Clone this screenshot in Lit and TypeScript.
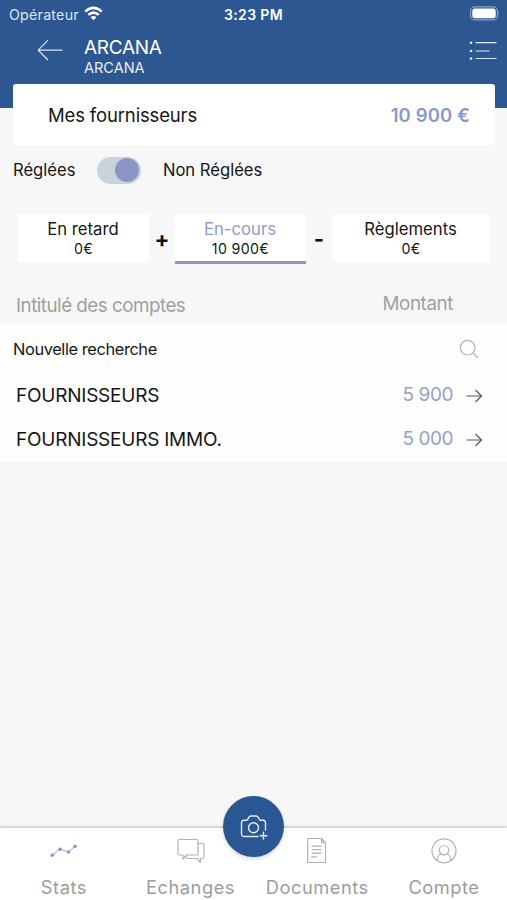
import { LitElement, html, css, svg } from "lit";
import { customElement } from "lit/decorators.js";

const accounts = [
  { label: "FOURNISSEURS", amount: "5 900", cls: "a1" },
  { label: "FOURNISSEURS IMMO.", amount: "5 000", cls: "a2" },
];

const icons = {
  stats: svg`<g fill="#8c93cb" stroke="#a0a5d6" stroke-width="1"><path fill="none" d="M3.300 18.200L11 12.200L19.500 15L26 9.200"/><g stroke="none"><circle cx="3.300" cy="18.200" r="1.800"/><circle cx="11" cy="12.200" r="1.800"/><circle cx="19.500" cy="15" r="1.800"/><circle cx="26" cy="9.200" r="1.800"/></g></g>`,
  chat: svg`<g fill="none" stroke="#b2b2b2" stroke-width="1.200" stroke-linejoin="round"><path d="M3.500 2.500H20.500Q22 2.500 22 4V16.500Q22 18 20.500 18H10.500L7 22V18H3.500Q2 18 2 16.500V4Q2 2.500 3.500 2.500Z"/><path d="M22 6.500H26.500Q28 6.500 28 8V20Q28 21.500 26.500 21.500H24.500V25.500L21 21.500H11.500Q10 21.500 10 20V18.500"/></g>`,
  doc: svg`<g fill="none" stroke="#b2b2b2" stroke-width="1.200" stroke-linejoin="round"><path d="M5.700 1.500H19.500L23.500 5.700V25.500H5.700ZM19.500 1.500V5.700H23.500M9.500 9.200H19.500M9.500 12.700H19.500M9.500 16.200H19.500M9.500 19.800H15"/></g>`,
  user: svg`<g fill="none" stroke="#b2b2b2" stroke-width="1.200"><circle cx="15" cy="13.800" r="12"/><circle cx="15" cy="13.200" r="4.700"/><path d="M8 23.500C8 19.500 10 17 12.300 16.900M22 23.500C22 19.500 20 17 17.700 16.900"/></g>`,
};

const tabs = [
  { label: "Stats", icon: icons.stats, cls: "t1" },
  { label: "Echanges", icon: icons.chat, cls: "t2" },
  { label: "Documents", icon: icons.doc, cls: "t3" },
  { label: "Compte", icon: icons.user, cls: "t4" },
];

@customElement("app-root")
export class AppRoot extends LitElement {
  static styles = css`
    :host {
      display: flex;
      flex-direction: column;
      height: 900px;
      overflow: hidden;
      background: #f7f7f7;
      color: #161616;
      font-family: Inter, "Liberation Sans", sans-serif;
      white-space: nowrap;
    }
    * { box-sizing: border-box; }
    svg { display: block; flex: none; }
    header { height: 108px; flex: none; background: #2d5790; color: #fff; }
    .status {
      display: grid;
      grid-template-columns: 1fr auto 1fr;
      align-items: center;
      height: 28px;
      padding: 0 7px 0 9px;
    }
    .carrier { display: flex; align-items: center; gap: 5px; font-size: 14.200px; color: #dfe7f2; letter-spacing: 0.250px; }
    .carrier svg { margin-top: -2px; }
    .time { font-size: 14px; font-weight: 600; letter-spacing: 0.350px; margin-right: 2px; }
    .battery { justify-self: end; margin-top: -2px; }
    .nav { display: flex; align-items: flex-start; padding: 8px 10px 0 37px; }
    .back { margin-top: 3px; }
    .titles { margin-left: 21px; flex: 1; padding-top: 1px; }
    .title { font-size: 19px; line-height: 22px; letter-spacing: -0.300px; }
    .subtitle { font-size: 14.500px; line-height: 18px; color: #e8eef6; }
    .menu { margin-top: 4px; }
    .card {
      display: flex;
      align-items: center;
      justify-content: space-between;
      flex: none;
      height: 61px;
      margin: -24px 12px 0 13px;
      padding: 0 25px 0 35px;
      background: #fff;
      border-radius: 3px;
      font-size: 18.500px;
    }
    .heading { letter-spacing: -0.150px; padding-top: 1px; }
    .total { color: #8b98c6; font-weight: 600; letter-spacing: 0.150px; padding-top: 1px; }
    .filter { display: flex; align-items: center; height: 50px; padding-left: 13px; font-size: 16.600px; flex: none; }
    .toggle {
      display: flex;
      justify-content: flex-end;
      width: 44px;
      height: 27px;
      padding: 1.500px;
      border-radius: 14px;
      background: #c9d3da;
      margin: 0 22px 0 21.500px;
    }
    .thumb { width: 24px; height: 24px; border-radius: 50%; background: #8b96c6; }
    .boxes { display: flex; height: 50px; margin: 19px 17px 0 18px; flex: none; }
    .box {
      width: 131px;
      height: 48px;
      padding-top: 5px;
      background: #fff;
      border-radius: 3px;
      text-align: center;
    }
    .box.active { height: 50px; border-bottom: 3px solid #8b9ac8; border-radius: 2px 2px 0 0; }
    .box.last { width: 158px; }
    .name { font-size: 16.700px; line-height: 20px; margin-left: -1px; }
    .active .name { color: #8f9dcb; }
    .value { font-size: 14.200px; line-height: 19px; letter-spacing: 0.350px; }
    .op { width: 26px; text-align: center; font-size: 22px; font-weight: 700; line-height: 50px; color: #111; }
    .heads {
      display: flex;
      justify-content: space-between;
      height: 60px;
      padding: 30px 54px 0 16px;
      color: #a0a0a0;
      font-size: 18.800px;
      letter-spacing: -0.500px;
      line-height: 24px;
      flex: none;
    }
    .heads .right { margin-top: -2px; letter-spacing: -0.400px; }
    .list { background: #fefefe; height: 138px; flex: none; }
    .search {
      display: flex;
      align-items: center;
      justify-content: space-between;
      height: 50px;
      padding: 0 28px 0 13px;
      font-size: 16.400px;
      letter-spacing: -0.400px;
    }
    .row { display: flex; align-items: center; height: 44px; padding: 0 24px 0 16px; font-size: 19px; letter-spacing: -0.230px; }
    .row .label { margin-top: -1px; }
    .row .amount { margin-left: auto; margin-right: 13px; margin-top: -4px; letter-spacing: -0.450px; color: #969fcd; }
    .tabs {
      position: relative;
      display: flex;
      margin-top: auto;
      height: 72px;
      flex: none;
      background: #fff;
      box-shadow: 0 -1px 3px rgba(0, 0, 0, 0.25);
    }
    .tab {
      display: flex;
      flex-direction: column;
      align-items: center;
      width: 126.700px;
      padding: 9px 0 0 1px;
      font-size: 18.300px;
      line-height: 22px;
      letter-spacing: 0.500px;
      color: #9d9d9d;
    }
    .tab svg { margin-bottom: 11px; }
    .fab {
      position: absolute;
      left: 223px;
      top: -32px;
      width: 61px;
      height: 61px;
      border-radius: 50%;
      background: #2a5793;
      box-shadow: 0 2px 4px rgba(0, 0, 0, 0.15);
      display: grid;
      place-items: center;
    }
  `;

  render() {
    return html`
      <header>
        <div class="status">
          <div class="carrier">
            <span>Opérateur</span>
            <svg width="19" height="15" viewBox="0 0 19 15" fill="none" stroke="#fff" stroke-width="2.500">
              <path d="M1.200 5.600Q9.500 -1.900 17.800 5.600M4.300 8.900Q9.500 4.300 14.700 8.900" />
              <path d="M6.600 11.200Q9.500 8.800 12.400 11.200L9.500 14.200Z" fill="#fff" stroke="none" />
            </svg>
          </div>
          <div class="time">3:23 PM</div>
          <svg class="battery" width="30" height="15" viewBox="0 0 30 15">
            <rect x="0.600" y="0.900" width="26.800" height="13" rx="4" fill="none" stroke="#8ba3c5" stroke-width="1.100" />
            <rect x="2.300" y="2.600" width="23.400" height="9.600" rx="2.500" fill="#fff" />
            <path d="M28.500 5Q30 7.400 28.500 9.800Z" fill="#8ba3c5" />
          </svg>
        </div>
        <div class="nav">
          <svg class="back" width="26" height="22" viewBox="0 0 26 22" fill="none" stroke="#dfe7f2" stroke-width="1.200">
            <path d="M25.500 11.200H1.200M11 1.200L1.200 11.200L11 21" />
          </svg>
          <div class="titles">
            <div class="title">ARCANA</div>
            <div class="subtitle">ARCANA</div>
          </div>
          <svg class="menu" width="28" height="22" viewBox="0 0 28 22" fill="#dfe7f2">
            <path d="M6.500 2.100h21v1.100h-21zM6.500 10.500h14v1.100h-14zM6.500 18h21v1.100h-21z" />
            <circle cx="2" cy="2.700" r="1.300" /><circle cx="2" cy="11" r="1.300" /><circle cx="2" cy="18.600" r="1.300" />
          </svg>
        </div>
      </header>

      <section class="card"><span class="heading">Mes fournisseurs</span><span class="total">10 900 €</span></section>

      <div class="filter">
        <span class="paid">Réglées</span>
        <div class="toggle"><div class="thumb"></div></div>
        <span class="unpaid">Non Réglées</span>
      </div>

      <div class="boxes">
        <div class="box"><div class="name">En retard</div><div class="value">0€</div></div>
        <div class="op">+</div>
        <div class="box active"><div class="name">En-cours</div><div class="value">10 900€</div></div>
        <div class="op">-</div>
        <div class="box last"><div class="name">Règlements</div><div class="value">0€</div></div>
      </div>

      <div class="heads"><span>Intitulé des comptes</span><span class="right">Montant</span></div>

      <div class="list">
        <div class="search">
          <span>Nouvelle recherche</span>
          <svg width="20" height="20" viewBox="0 0 20 20" fill="none" stroke="#b4b4b4" stroke-width="1.200">
            <circle cx="8.700" cy="8.700" r="7.300" /><path d="M14 14L19 18.700" />
          </svg>
        </div>
        ${accounts.map(
          (a) => html`<div class="row ${a.cls}">
            <span class="label">${a.label}</span><span class="amount">${a.amount}</span>
            <svg width="17" height="14" viewBox="0 0 17 14" fill="none" stroke="#555" stroke-width="1.200">
              <path d="M0.500 7H15.500M9.500 1L15.500 7L9.500 13" />
            </svg>
          </div>`
        )}
      </div>

      <nav class="tabs">
        ${tabs.map(
          (t) => html`<div class="tab ${t.cls}">
            <svg width="30" height="28" viewBox="0 0 30 28">${t.icon}</svg>
            <span>${t.label}</span>
          </div>`
        )}
        <div class="fab">
          <svg width="28" height="26" viewBox="0 0 28 26" fill="none" stroke="#e4ebf5" stroke-width="1.400" stroke-linejoin="round" stroke-linecap="round">
            <path d="M18 22.500H4Q1.500 22.500 1.500 20V9Q1.500 6.200 4 6.200H6.500Q7.800 6 8.300 4.200Q9 2 10.800 2H16.200Q18 2 18.700 4.200Q19.200 6 20.500 6.200H23Q25.500 6.200 25.500 9V16" />
            <circle cx="13.500" cy="13.700" r="5" />
            <path d="M23.500 18.300V25M20.200 21.700H26.800" />
          </svg>
        </div>
      </nav>
    `;
  }
}
